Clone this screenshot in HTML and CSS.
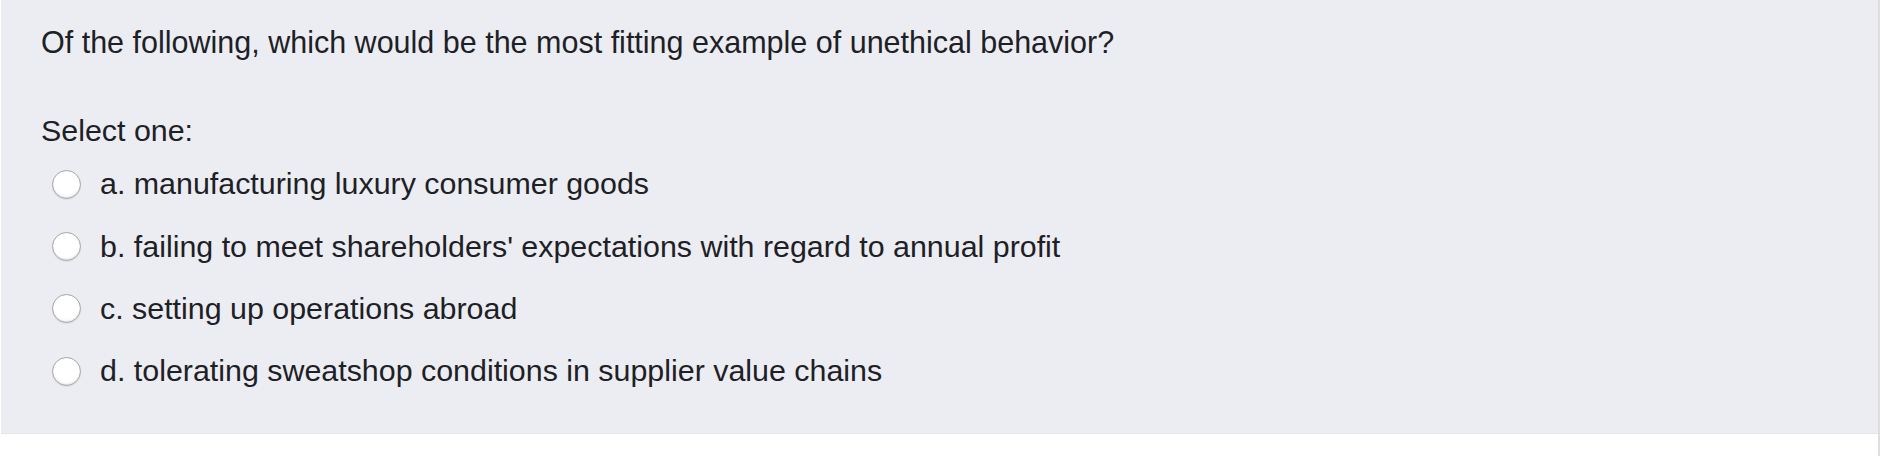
FILE: index.html
```html
<!DOCTYPE html>
<html lang="en">
<head>
<meta charset="utf-8">
<title>Question</title>
<link rel="stylesheet" href="styles.css">
</head>
<body>
<div class="page">
  <div class="formulation">
    <div class="qtext">Of the following, which would be the most fitting example of unethical behavior?</div>
    <div class="prompt">Select one:</div>
    <div class="answer">
      <div class="option"><span class="radio"></span><span class="label">a. manufacturing luxury consumer goods</span></div>
      <div class="option"><span class="radio"></span><span class="label">b. failing to meet shareholders' expectations with regard to annual profit</span></div>
      <div class="option"><span class="radio"></span><span class="label">c. setting up operations abroad</span></div>
      <div class="option"><span class="radio"></span><span class="label">d. tolerating sweatshop conditions in supplier value chains</span></div>
    </div>
  </div>
</div>
</body>
</html>
```

FILE: styles.css
```css
html, body {
  margin: 0;
  padding: 0;
  background: #ffffff;
}
body {
  font-family: "Liberation Sans", Arial, Helvetica, sans-serif;
  color: #1d2125;
}
.page {
  height: 456px;
  border-right: 2px solid #dedee0;
  box-sizing: border-box;
  width: 1880px;
  padding-left: 1px;
}
.formulation {
  background: #ecedf2;
  height: 434px;
  box-sizing: border-box;
  padding: 24px 0 0 40px;
  border-bottom: 1px solid #e4e4ea;
}
.qtext {
  font-size: 30.5px;
  line-height: 36px;
}
.prompt {
  font-size: 30.4px;
  line-height: 36px;
  margin-top: 52px;
  margin-bottom: 4px;
}
.answer {
  display: flex;
  flex-direction: column;
}
.option {
  display: flex;
  align-items: center;
  height: 62.4px;
  font-size: 30.4px;
  line-height: 36px;
}
.radio {
  width: 29px;
  height: 29px;
  box-sizing: border-box;
  border-radius: 50%;
  border: 1px solid #a5a5aa;
  background: radial-gradient(circle at 50% 40%, #ffffff 55%, #efeff2 100%);
  box-shadow: inset 0 -1px 1px rgba(0,0,0,0.1), 0 1px 1px rgba(0,0,0,0.06);
  margin-left: 11px;
  margin-right: 19px;
  margin-top: 2px;
  flex: none;
}
```
